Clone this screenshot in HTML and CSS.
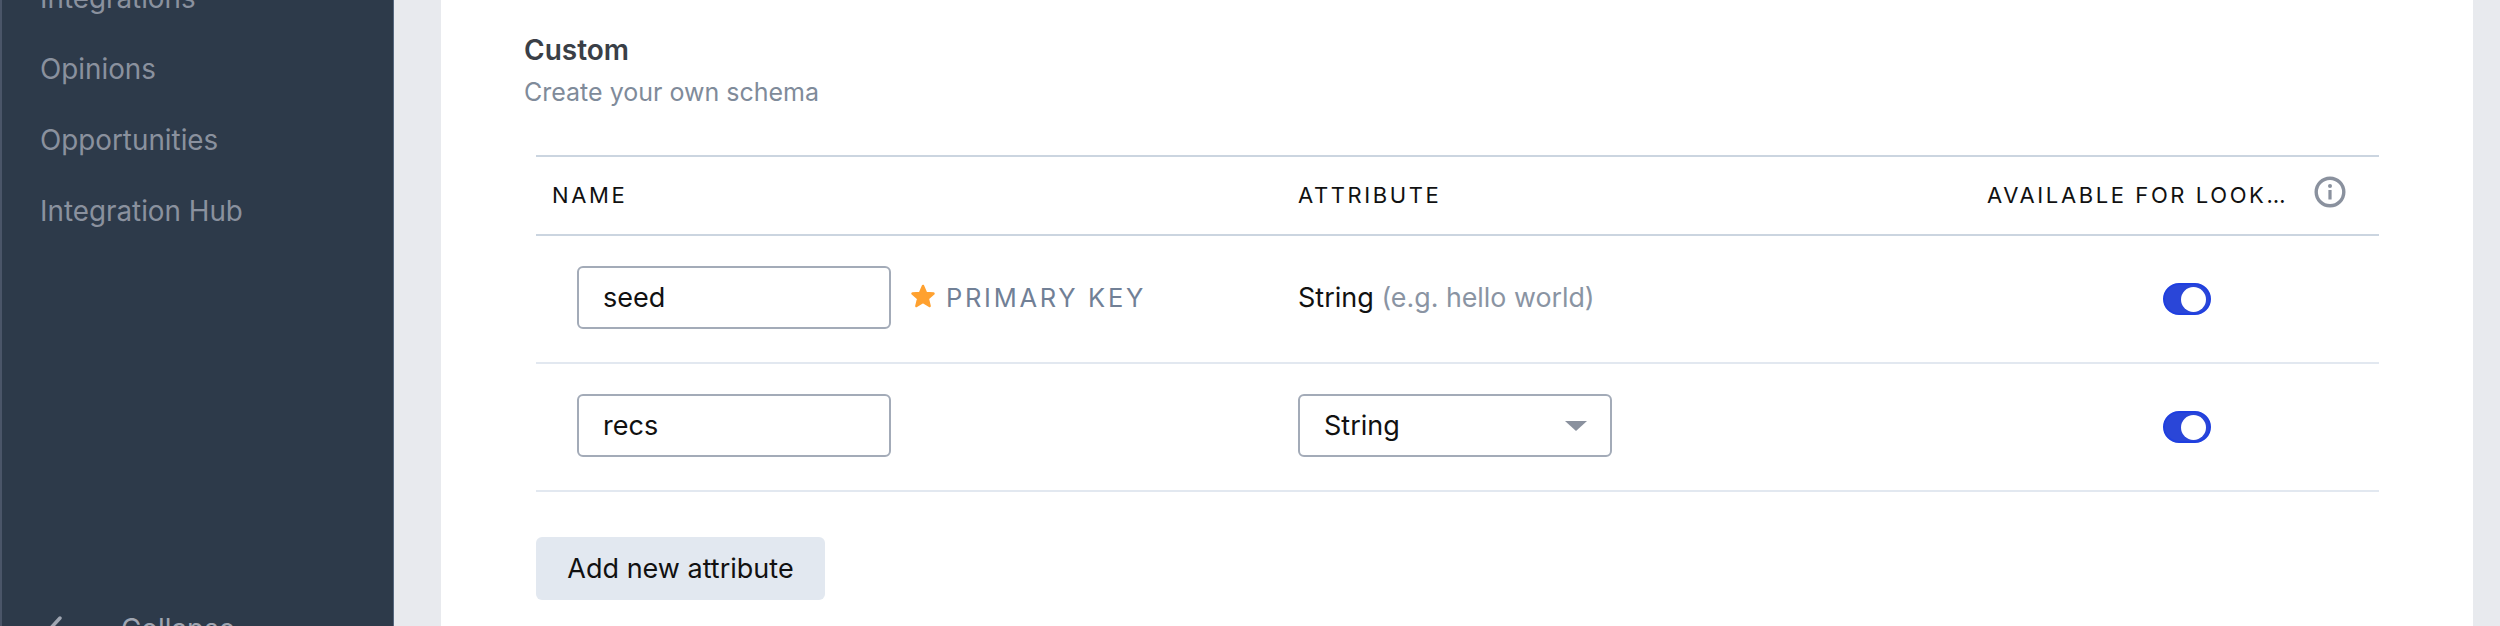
FILE: index.html
```html
<!DOCTYPE html>
<html lang="en">
<head>
<meta charset="utf-8">
<title>Custom schema</title>
<link rel="stylesheet" href="styles.css">
</head>
<body>
<div class="app">
  <aside class="sidebar">
    <nav class="nav">
      <a class="nav-item">Integrations</a>
      <a class="nav-item">Opinions</a>
      <a class="nav-item">Opportunities</a>
      <a class="nav-item">Integration Hub</a>
    </nav>
    <div class="collapse">
      <svg class="chevron" viewBox="0 0 16 28" width="16" height="28"><path d="M14 2 L3 14 L14 26" fill="none" stroke="#a0a6b2" stroke-width="3.5" stroke-linecap="round" stroke-linejoin="round"/></svg>
      <span>Collapse</span>
    </div>
  </aside>
  <main class="main">
    <section class="panel">
      <h2 class="title">Custom</h2>
      <p class="subtitle">Create your own schema</p>
      <div class="schema">
        <div class="row head">
          <div class="cell name-cell">NAME</div>
          <div class="cell">ATTRIBUTE</div>
          <div class="cell look-head">
            <span>AVAILABLE FOR LOOK…</span>
            <svg class="info" viewBox="0 0 32 32" width="32" height="32"><circle cx="16" cy="16" r="13.8" fill="none" stroke="#8a919e" stroke-width="3.4"/><circle cx="16" cy="10" r="2" fill="#8a919e"/><rect x="14.4" y="14" width="3.2" height="9.5" fill="#8a919e"/></svg>
          </div>
        </div>
        <div class="row body">
          <div class="cell field-cell">
            <input class="text-input" type="text" value="seed">
            <svg class="star" viewBox="0 0 26 26" width="26" height="26"><polygon points="13,3 16,10 23.5,10.6 17.8,15.5 19.6,23 13,19 6.4,23 8.2,15.5 2.5,10.6 10,10" fill="#ffa12f" stroke="#ffa12f" stroke-width="2.5" stroke-linejoin="round"/></svg>
            <span class="primary">PRIMARY KEY</span>
          </div>
          <div class="cell type-cell">String <span class="example">(e.g. hello world)</span></div>
          <div class="cell toggle-cell"><span class="toggle"><span class="knob"></span></span></div>
        </div>
        <div class="row body">
          <div class="cell field-cell">
            <input class="text-input" type="text" value="recs">
          </div>
          <div class="cell type-cell">
            <div class="select"><span>String</span><span class="caret"></span></div>
          </div>
          <div class="cell toggle-cell"><span class="toggle"><span class="knob"></span></span></div>
        </div>
      </div>
      <button class="add-btn" type="button">Add new attribute</button>
    </section>
  </main>
</div>
</body>
</html>
```
FILE: styles.css
```css
* { box-sizing: border-box; }
html, body { margin: 0; height: 100%; overflow: hidden; }
body { font-family: Inter, "Liberation Sans", sans-serif; background: #e8eaee; color: #111; }
.app { display: flex; height: 626px; overflow: hidden; }

.sidebar {
  width: 394px; flex: none; height: 626px;
  background: #2d3a4a;
  border-left: 2px solid #4a5568;
  border-right: 1px solid #56687e;
  display: flex; flex-direction: column; justify-content: space-between;
  overflow: hidden;
}
.nav { display: flex; flex-direction: column; margin-top: -37px; padding-left: 38px; }
.nav-item { height: 71px; line-height: 71px; font-size: 27.8px; color: #8a919e; }
.collapse { display: flex; align-items: flex-start; gap: 59px; padding-left: 44px; height: 10px; color: #a0a6b2; font-size: 27.8px; line-height: 24px; }
.chevron { flex: none; }
.collapse span { margin-top: 1px; }

.main { flex: 1; padding: 0 27px 0 47px; min-width: 0; }
.panel { background: #fff; height: 626px; padding: 32px 94px 0 83px; }
.title { margin: 0; font-size: 28px; line-height: 36px; font-weight: 600; color: #3a3f47; }
.subtitle { margin: 6px 0 0; font-size: 25px; line-height: 36px; color: #7f8b9a; }

.schema { margin: 45px 0 0 12px; }
.row { display: grid; grid-template-columns: 746px 689px 1fr; align-items: center; }
.cell { padding-left: 16px; min-width: 0; }
.head { height: 81px; border-top: 2px solid #cbd5e0; border-bottom: 2px solid #cbd5e0; font-size: 22px; letter-spacing: 2.6px; color: #111; }
.head .cell { margin-top: -2px; }
.look-head { display: flex; align-items: center; gap: 26px; padding-left: 16px; }
.look-head span { white-space: nowrap; }
.info { margin-top: -5px; flex: none; }
.body { height: 128px; border-bottom: 2px solid #e2e8f0; font-size: 27px; }
.field-cell { display: flex; align-items: center; padding-left: 41px; margin-top: -3px; }
.text-input {
  width: 314px; height: 63px; padding: 0 24px;
  border: 2px solid #a3abb8; border-radius: 6px; background: #fff;
  font: inherit; color: #111; outline: none;
}
.star { margin-left: 19px; margin-top: -4px; flex: none; }
.primary { margin-left: 10px; font-size: 25.5px; letter-spacing: 2.7px; color: #718096; }
.type-cell { white-space: nowrap; margin-top: -3px; }
.example { color: #8a94a3; font-size: 26.8px; }
.toggle-cell { padding-left: 192px; display: flex; align-items: center; }
.toggle { display: flex; justify-content: flex-end; align-items: center; width: 48px; height: 32px; padding-right: 3px; border-radius: 16px; background: #2a46d8; border: 2px solid #1f3fe0; }
.knob { width: 25px; height: 25px; border-radius: 50%; background: #fff; }
.select {
  width: 314px; height: 63px; padding: 0 24px;
  display: flex; align-items: center; justify-content: space-between;
  border: 2px solid #a3abb8; border-radius: 6px; background: #fff;
}
.caret { width: 0; height: 0; border-left: 11px solid transparent; border-right: 11px solid transparent; border-top: 10px solid #8a919e; margin-right: -1px; }

.add-btn {
  display: block; margin: 45px 0 0 12px;
  width: 289px; height: 63px; border: 0; border-radius: 6px;
  background: #e2e8f0; color: #111;
  font: 27px Inter, "Liberation Sans", sans-serif;
}
```
